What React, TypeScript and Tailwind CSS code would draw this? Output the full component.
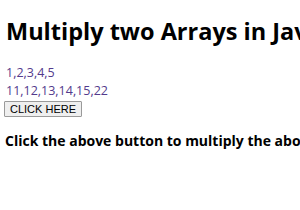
export default function App() {
  return (
    <div className="w-[300px] h-[210px] overflow-hidden bg-white text-black whitespace-nowrap" style={{ fontFamily: '"Open Sans", "Noto Sans", sans-serif' }}>
      <div className="pl-[6px] pt-[16px]">
        <h1 className="text-[23.5px] leading-[30px] font-bold">Multiply two Arrays in JavaScript</h1>
        <div className="mt-[18px] text-[12.5px] leading-[18px] text-[#533a8c]">
          <div>1,2,3,4,5</div>
          <div>11,12,13,14,15,22</div>
        </div>
        <button className="block -ml-[2px] mt-[1px] h-[16px] px-[5px] border border-[#9a9a9a] bg-[#efefef] text-[11px] leading-[14px] text-black rounded-[1px]" style={{ fontFamily: '"Liberation Sans", Arial, sans-serif' }}>CLICK HERE</button>
        <p className="mt-[14px] -ml-[1px] text-[14px] leading-[20px] font-bold">Click the above button to multiply the above arrays.</p>
      </div>
    </div>
  );
}
